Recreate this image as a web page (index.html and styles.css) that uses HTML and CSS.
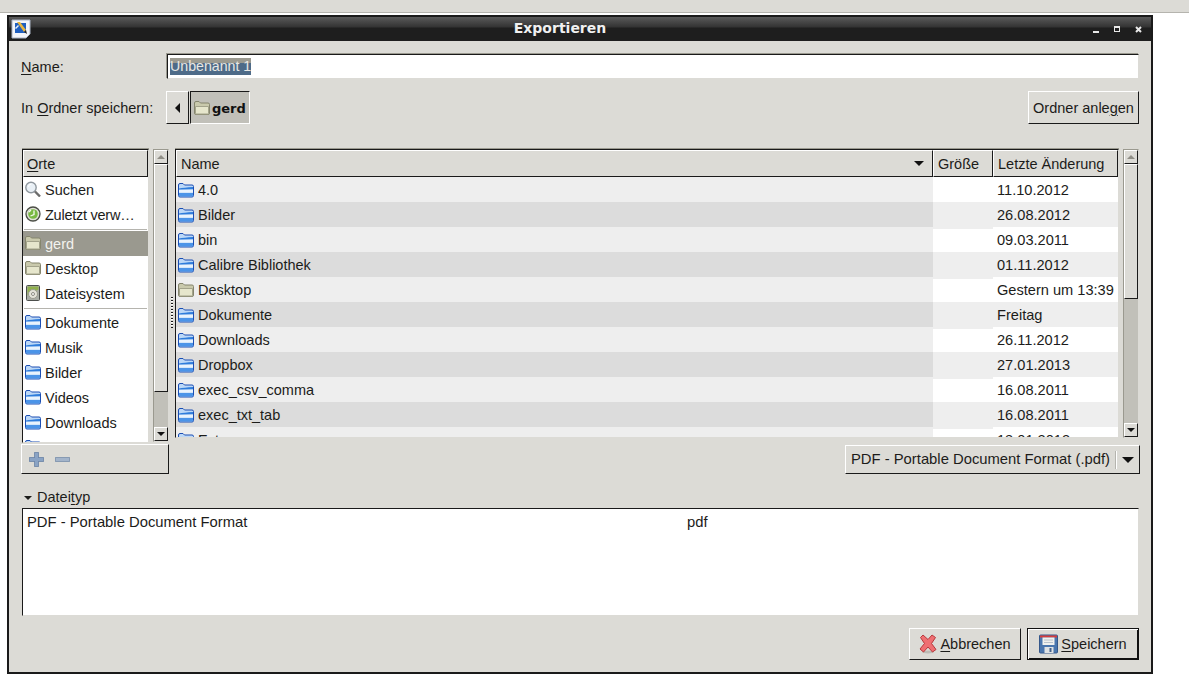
FILE: index.html
```html
<!DOCTYPE html>
<html lang="de">
<head>
<meta charset="utf-8">
<title>Exportieren</title>
<link rel="stylesheet" href="styles.css">
</head>
<body>
<svg class="defs" width="0" height="0">
  <defs>
    <symbol id="folder-blue" viewBox="0 0 16 16">
      <path d="M.5 13.500V3q0-1.500 1.500-1.500h3l1.500 1.500h7.500q1.500 0 1.500 1.500v9q0 1.500-1.500 1.500H2q-1.500 0-1.500-1.500z" fill="#bcd8f7" stroke="#1c4fb4"/>
      <path d="M1 6.500q5-1 14-1.500v2.500H1z" fill="#2f7ddb"/>
      <path d="M1 8q7-.5 14-.5v3H1z" fill="#e9f3fd"/>
      <path d="M1 11h14v2.500q0 1-1 1H2q-1 0-1-1z" fill="#4b94e8"/>
    </symbol>
    <symbol id="folder-tan" viewBox="0 0 16 16">
      <path d="M.5 13V3q0-1.500 1.500-1.500h3l1.500 1.500h7.500q1.500 0 1.500 1.500v8.500q0 1.500-1.500 1.500H2q-1.500 0-1.500-1.500z" fill="#c9c9ac" stroke="#85856d"/>
      <path d="M1.500 6.500h13v7q0 .5-.5.5H2q-.5 0-.5-.5z" fill="#e6e6cc" stroke="#a3a38b"/>
    </symbol>
  </defs>
</svg>
<div class="desktop-strip"></div>
<main class="window">
  <header class="titlebar">
    <svg class="app-icon" width="20" height="20" viewBox="0 0 20 20">
      <path d="M1 1h18v14l-4 4H1z" fill="#f3f5fa" stroke="#aab3c4"/>
      <rect x="4" y="4" width="11" height="10" fill="#1f5fc0"/>
      <path d="M6 3l7 10 2-2-6-8z" fill="#e9b53c"/>
      <path d="M13 13l3 2-1-4z" fill="#222"/>
      <path d="M4 9l3-3 1 1-3 3z" fill="#e8eef8"/>
    </svg>
    <h1 class="title">Exportieren</h1>
    <div class="wm-buttons">
      <span class="wm-min"></span>
      <span class="wm-max"></span>
      <svg class="wm-close" width="7" height="7" viewBox="0 0 7 7"><path d="M1 1l5 5M6 1l-5 5" stroke="#e8e8e8" stroke-width="2"/></svg>
    </div>
  </header>

  <div class="content">
    <div class="name-row">
      <label class="row-label"><u>N</u>ame:</label>
      <div class="entry"><span class="selection">Unbenannt 1</span></div>
    </div>

    <div class="folder-row">
      <label class="row-label">In <u>O</u>rdner speichern:</label>
      <button class="btn path-back"><span class="arrow-left"></span></button>
      <div class="path-current">
        <svg class="icon" width="16" height="16"><use href="#folder-tan"/></svg>
        <b>gerd</b>
      </div>
      <button class="btn new-folder">Ordner anle<u>g</u>en</button>
    </div>

    <div class="panes">
      <section class="places">
        <div class="places-top">
          <div class="list-frame places-list">
            <div class="col-head"><u>O</u>rte</div>
            <ul class="side-list">
              <li>
                <svg class="icon" width="16" height="16" viewBox="0 0 16 16"><circle cx="6" cy="6.500" r="5.200" fill="#e9f0f6" stroke="#8f979e" stroke-width="1.400"/><path d="M3.500 6a3 3 0 0 1 3-3" stroke="#fff" fill="none"/><path d="M10 10.500l5 5" stroke="#6c6c6c" stroke-width="2.400"/></svg>
                <span>Suchen</span>
              </li>
              <li>
                <svg class="icon" width="16" height="16" viewBox="0 0 16 16"><circle cx="8" cy="8" r="7" fill="#dfe0d6" stroke="#4a4d45" stroke-width="1.300"/><circle cx="8" cy="8" r="4.800" fill="#79b943"/><path d="M9 4.500v4L5.500 10M4 6l2-2" stroke="#f4f8ee" stroke-width="1.300" fill="none"/></svg>
                <span class="truncated">Zuletzt verw…</span>
              </li>
              <li class="sep"></li>
              <li class="selected">
                <svg class="icon" width="16" height="16"><use href="#folder-tan"/></svg>
                <span>gerd</span>
              </li>
              <li>
                <svg class="icon" width="16" height="16"><use href="#folder-tan"/></svg>
                <span>Desktop</span>
              </li>
              <li>
                <svg class="icon" width="16" height="16" viewBox="0 0 16 16"><rect x="1.500" y=".5" width="13" height="15" rx="1" fill="#a9ada6" stroke="#4c4f4c"/><path d="M2.500 1.500h11v3l-11 6z" fill="#8fb04c"/><circle cx="8" cy="9" r="4.500" fill="#e4e4da" stroke="#9a9a90"/><circle cx="8" cy="9" r="1.500" fill="#fff" stroke="#8a8a82"/></svg>
                <span>Dateisystem</span>
              </li>
              <li class="sep"></li>
              <li><svg class="icon" width="16" height="16"><use href="#folder-blue"/></svg><span>Dokumente</span></li>
              <li><svg class="icon" width="16" height="16"><use href="#folder-blue"/></svg><span>Musik</span></li>
              <li><svg class="icon" width="16" height="16"><use href="#folder-blue"/></svg><span>Bilder</span></li>
              <li><svg class="icon" width="16" height="16"><use href="#folder-blue"/></svg><span>Videos</span></li>
              <li><svg class="icon" width="16" height="16"><use href="#folder-blue"/></svg><span>Downloads</span></li>
              <li><svg class="icon" width="16" height="16"><use href="#folder-blue"/></svg></li>
            </ul>
          </div>
          <div class="scrollbar places-scroll">
            <span class="sb-btn"><i class="tri-up"></i></span>
            <span class="sb-thumb"></span>
            <span class="sb-trough"></span>
            <span class="sb-btn sb-down"><i class="tri-down"></i></span>
          </div>
        </div>
        <div class="places-tools">
          <svg width="15" height="15" viewBox="0 0 15 15"><path d="M5.500 .5h4v5h5v4h-5v5h-4v-5h-5v-4h5z" fill="#8aa3c4" stroke="#3f5f8c" stroke-dasharray="1 1"/></svg>
          <svg width="15" height="5" viewBox="0 0 15 5"><rect x=".5" y=".5" width="14" height="4" fill="#a3b4ca" stroke="#4f6d94" stroke-dasharray="1 1"/></svg>
        </div>
      </section>

      <div class="handle"><span class="grip"></span></div>

      <section class="browser">
        <div class="browser-top">
          <div class="list-frame files">
            <div class="file-row file-head">
              <div class="col-head head-name">Name<i class="tri-sort"></i></div>
              <div class="col-head">Größe</div>
              <div class="col-head">Letzte Änderung</div>
            </div>
            <div class="file-rows">
              <div class="file-row"><span class="cell-name"><svg class="icon" width="16" height="16"><use href="#folder-blue"/></svg>4.0</span><span></span><span class="cell-date">11.10.2012</span></div>
              <div class="file-row"><span class="cell-name"><svg class="icon" width="16" height="16"><use href="#folder-blue"/></svg>Bilder</span><span></span><span class="cell-date">26.08.2012</span></div>
              <div class="file-row"><span class="cell-name"><svg class="icon" width="16" height="16"><use href="#folder-blue"/></svg>bin</span><span></span><span class="cell-date">09.03.2011</span></div>
              <div class="file-row"><span class="cell-name"><svg class="icon" width="16" height="16"><use href="#folder-blue"/></svg>Calibre Bibliothek</span><span></span><span class="cell-date">01.11.2012</span></div>
              <div class="file-row"><span class="cell-name"><svg class="icon" width="16" height="16"><use href="#folder-tan"/></svg>Desktop</span><span></span><span class="cell-date">Gestern um 13:39</span></div>
              <div class="file-row"><span class="cell-name"><svg class="icon" width="16" height="16"><use href="#folder-blue"/></svg>Dokumente</span><span></span><span class="cell-date">Freitag</span></div>
              <div class="file-row"><span class="cell-name"><svg class="icon" width="16" height="16"><use href="#folder-blue"/></svg>Downloads</span><span></span><span class="cell-date">26.11.2012</span></div>
              <div class="file-row"><span class="cell-name"><svg class="icon" width="16" height="16"><use href="#folder-blue"/></svg>Dropbox</span><span></span><span class="cell-date">27.01.2013</span></div>
              <div class="file-row"><span class="cell-name"><svg class="icon" width="16" height="16"><use href="#folder-blue"/></svg>exec_csv_comma</span><span></span><span class="cell-date">16.08.2011</span></div>
              <div class="file-row"><span class="cell-name"><svg class="icon" width="16" height="16"><use href="#folder-blue"/></svg>exec_txt_tab</span><span></span><span class="cell-date">16.08.2011</span></div>
              <div class="file-row"><span class="cell-name"><svg class="icon" width="16" height="16"><use href="#folder-blue"/></svg>Extras</span><span></span><span class="cell-date">18.01.2013</span></div>
            </div>
          </div>
          <div class="scrollbar files-scroll">
            <span class="sb-btn"><i class="tri-up"></i></span>
            <span class="sb-thumb"></span>
            <span class="sb-trough"></span>
            <span class="sb-btn sb-down"><i class="tri-down"></i></span>
          </div>
        </div>
        <div class="filter-row">
          <button class="btn combo"><span class="combo-text">PDF - Portable Document Format (.pdf)</span><span class="combo-sep"></span><i class="tri-combo"></i></button>
        </div>
      </section>
    </div>

    <div class="expander"><i class="tri-exp"></i><span>Datei<u>t</u>yp</span></div>

    <div class="type-box">
      <div class="type-row"><span class="type-name">PDF - Portable Document Format</span><span>pdf</span></div>
    </div>

    <div class="actions">
      <button class="btn action">
        <svg class="icon" width="18" height="20" viewBox="0 0 18 20"><ellipse cx="9" cy="18" rx="6" ry="1.500" fill="#bdbbb5"/><path d="M4 1l5 4.500L13 1l3.500 2.500L12.500 9.500l4.500 6-3.500 2.500L9 13l-4.500 5L1 15l4.500-5.500L1.500 3.500z" fill="#ef6f72" stroke="#b8383c"/></svg>
        <span><u>A</u>bbrechen</span>
      </button>
      <button class="btn action default">
        <svg class="icon" width="19" height="20" viewBox="0 0 19 20"><rect x=".5" y="1" width="18" height="18" rx="1" fill="#4a76ae" stroke="#34578a"/><rect x="1" y="1.500" width="17" height="2" fill="#d83c3c"/><rect x="3.500" y="3.500" width="12" height="7.500" fill="#f1f1ee"/><path d="M5 6h9M5 8.500h9" stroke="#b9c2cc"/><rect x="5.500" y="13" width="9" height="6" fill="#dfe2e4"/><rect x="10.500" y="14" width="2" height="4" fill="#44618a"/></svg>
        <span><u>S</u>peichern</span>
      </button>
    </div>
  </div>
</main>
</body>
</html>
```

FILE: styles.css
```css
* { box-sizing: border-box; }

html, body { margin: 0; padding: 0; }

body {
  width: 1189px;
  height: 687px;
  overflow: hidden;
  background: #fff;
  color: #1c1c1a;
  font: 14.5px/17px "Liberation Sans", Arial, sans-serif;
}

.defs { display: block; height: 0; }

u { text-underline-offset: 2px; text-decoration-thickness: 1px; }

ul { list-style: none; margin: 0; padding: 0; }

.desktop-strip {
  height: 13px;
  background: #dcdbd6;
  border-bottom: 1px solid #b5b4ae;
}

.window {
  display: flex;
  flex-direction: column;
  width: 1146px;
  height: 659px;
  margin: 2px 0 0 7px;
  border: 2px solid #1a1a1a;
  background: #dcdbd6;
}

/* title bar */
.titlebar {
  display: flex;
  align-items: center;
  flex: none;
  height: 24px;
  padding: 0 9px 0 2px;
  background: linear-gradient(#5a5a5a 0, #333 10px, #1e1e1e 11px, #1e1e1e 100%);
}

.app-icon { flex: none; }

.title {
  flex: 1;
  margin: 0;
  padding: 0 4px 3px 0;
  color: #f0f0f0;
  font: bold 14px/20px "DejaVu Sans", sans-serif;
  text-align: center;
}

.wm-buttons { display: flex; align-items: center; gap: 15px; }
.wm-min { width: 6px; height: 2px; margin-top: 5px; background: #e8e8e8; }
.wm-max { width: 6px; height: 6px; border: 1px solid #e8e8e8; border-top-width: 2px; }
.wm-close { display: block; }

/* body */
.content {
  display: flex;
  flex-direction: column;
  flex: 1;
  padding: 13px 12px 0;
}

.row-label { flex: none; }

.name-row {
  display: flex;
  align-items: center;
  height: 25px;
}
.name-row .row-label { width: 146px; padding-top: 2px; }

.entry {
  flex: 1;
  height: 25px;
  padding: 3px 0 0 2px;
  background: #fff;
  border: 1px solid;
  border-color: #1a1a1a #dcdbd6 #dcdbd6 #1a1a1a;
  box-shadow: -1px -1px 0 #9a998f;
  line-height: 17px;
}

.selection {
  display: inline-block;
  height: 17px;
  color: #e8e8e4;
  font-size: 14.2px;
  background: linear-gradient(#9b9a90 0, #9b9a90 5px, #4e6b88 5px);
}

.folder-row {
  display: flex;
  align-items: center;
  height: 33px;
  margin-top: 12px;
}
.folder-row .row-label { width: 145px; padding-top: 2px; }

.btn {
  display: flex;
  align-items: center;
  margin: 0;
  padding: 0;
  color: inherit;
  font: inherit;
  background: #dcdbd6;
  border: 1px solid;
  border-color: #fff #1a1a1a #1a1a1a #fff;
}

.path-back {
  justify-content: center;
  width: 23px;
  height: 33px;
  flex: none;
}
.arrow-left {
  border: 5px solid transparent;
  border-right: 5px solid #111;
  border-left: 0;
}

.path-current {
  display: flex;
  align-items: center;
  gap: 2px;
  width: 60px;
  height: 33px;
  margin-left: 1px;
  padding-left: 3px;
  background: #c1c0b9;
  border: 1px solid;
  border-color: #1a1a1a #fff #fff #1a1a1a;
  font: bold 13px/17px "DejaVu Sans", sans-serif;
}
.path-current b { color: #111; padding-top: 1px; }

.new-folder {
  justify-content: center;
  width: 111px;
  height: 33px;
  margin-left: auto;
  padding-top: 1px;
}

.icon { display: block; flex: none; }

/* panes */
.panes {
  display: flex;
  height: 325px;
  margin-top: 25px;
}

.places { display: flex; flex-direction: column; width: 148px; flex: none; }
.places-top { display: flex; height: 294px; padding-left: 1px; }

.list-frame {
  display: flex;
  flex-direction: column;
  background: #fff;
  border: 1px solid;
  border-color: #1a1a1a #dcdbd6 #dcdbd6 #1a1a1a;
  box-shadow: 0 -1px 0 #9a998f;
  overflow: hidden;
}

.places-list { width: 127px; }

.col-head {
  flex: none;
  height: 27px;
  padding: 5px 0 0 3px;
  background: #dcdbd6;
  border: 1px solid;
  border-color: #fff #1a1a1a #1a1a1a #fff;
}

.side-list { flex: 1; overflow: hidden; }
.side-list li {
  display: flex;
  align-items: center;
  gap: 4px;
  height: 25px;
  padding-left: 2px;
}
.side-list li span { padding-top: 1px; }
.side-list li .icon { margin-top: -2px; }
.side-list .truncated { letter-spacing: -.25px; }
.side-list .sep {
  height: 4px;
  margin: 0 1px;
  padding: 0;
  background: linear-gradient(transparent 2px, #b5b4ae 2px, #b5b4ae 3px, transparent 3px);
}
.side-list .selected {
  background: #9a998f;
  color: #f2f2ee;
}

.scrollbar {
  display: flex;
  flex-direction: column;
  width: 16px;
  flex: none;
  background: #c1c0b9;
  border: 1px solid;
  border-color: #9a998f #dcdbd6 #dcdbd6 #9a998f;
}
.places-scroll { margin-left: 4px; height: 293px; }
.files-scroll { margin-left: 4px; }

.sb-btn {
  display: flex;
  align-items: center;
  justify-content: center;
  flex: none;
  height: 14px;
  background: #dcdbd6;
  border: 1px solid;
  border-color: #fff #1a1a1a #1a1a1a #fff;
}
.sb-thumb {
  flex: none;
  background: #dcdbd6;
  border: 1px solid;
  border-color: #fff #1a1a1a #1a1a1a #fff;
}
.places-scroll .sb-thumb { height: 228px; }
.files-scroll .sb-thumb { height: 135px; }
.sb-trough { flex: 1; }

.tri-up {
  border: 4px solid transparent;
  border-bottom: 4px solid #8f8e86;
  border-top: 0;
}
.tri-down {
  border: 4px solid transparent;
  border-top: 4px solid #111;
  border-bottom: 0;
}

.places-tools {
  display: flex;
  align-items: center;
  gap: 11px;
  height: 30px;
  margin-top: 1px;
  padding-left: 7px;
  background: #dcdbd6;
  border: 1px solid;
  border-color: #fff #1a1a1a #1a1a1a #fff;
}

.handle {
  display: flex;
  justify-content: center;
  flex: none;
  width: 6px;
}
.grip {
  width: 2px;
  height: 31px;
  margin-top: 148px;
  background: repeating-linear-gradient(#1a1a1a 0 1px, #fff 1px 2px, transparent 2px 3px);
}

.browser { display: flex; flex-direction: column; flex: 1; min-width: 0; }
.browser-top { display: flex; height: 289px; }

.files { flex: 1; min-width: 0; }

.file-row {
  display: grid;
  grid-template-columns: 757px 60px 1fr;
  height: 25px;
  line-height: 27px;
}
.file-head { flex: none; height: 27px; line-height: 17px; }
.file-head .col-head { padding-left: 4px; }
.head-name { display: flex; justify-content: space-between; padding-right: 8px; }

.tri-sort {
  margin-top: 5px;
  border: 5px solid transparent;
  border-top: 5px solid #111;
  border-bottom: 0;
  height: 5px;
}

.file-rows { flex: 1; overflow: hidden; }

.cell-name {
  display: flex;
  align-items: center;
  gap: 4px;
  padding-left: 2px;
  background: #eeeeee;
}
.cell-name .icon { margin-top: -2px; }
.cell-date { padding-left: 4px; background: #fff; font-size: 14.6px; }

.file-rows .file-row:nth-child(even) .cell-name { background: #dcdcdc; }
.file-rows .file-row:nth-child(even) span:nth-child(2),
.file-rows .file-row:nth-child(even) .cell-date { background: #eeeeee; }

.filter-row {
  display: flex;
  justify-content: flex-end;
  margin-top: 7px;
  margin-right: -1px;
}

.combo {
  width: 295px;
  height: 29px;
  padding: 0 5px 0 5px;
  font-size: 14.8px;
}
.combo-text { flex: 1; text-align: left; white-space: nowrap; }
.combo-sep { width: 1px; height: 18px; margin: 0 5px 0 0; background: #fff; box-shadow: -1px 0 0 #b5b4ae; }
.tri-combo {
  border: 6px solid transparent;
  border-top: 6px solid #111;
  border-bottom: 0;
}

.expander {
  display: flex;
  align-items: center;
  gap: 5px;
  height: 17px;
  margin-top: 15px;
  padding-left: 3px;
}
.tri-exp {
  border: 4px solid transparent;
  border-top: 4px solid #1c1c1a;
  border-bottom: 0;
}

.type-box {
  height: 108px;
  margin: 2px 0 0 1px;
  padding: 5px 0 0 4px;
  background: #fff;
  border: 1px solid;
  border-color: #1a1a1a #dcdbd6 #dcdbd6 #1a1a1a;
}
.type-row { display: flex; font-size: 14.8px; }
.type-name { width: 660px; }

.actions {
  display: flex;
  justify-content: flex-end;
  gap: 6px;
  margin-top: 12px;
}

.action {
  justify-content: center;
  gap: 3px;
  height: 32px;
  width: 112px;
}
.default {
  border-color: #111;
  box-shadow: inset 1px 1px 0 #fff, inset -1px -1px 0 #111;
}
```
